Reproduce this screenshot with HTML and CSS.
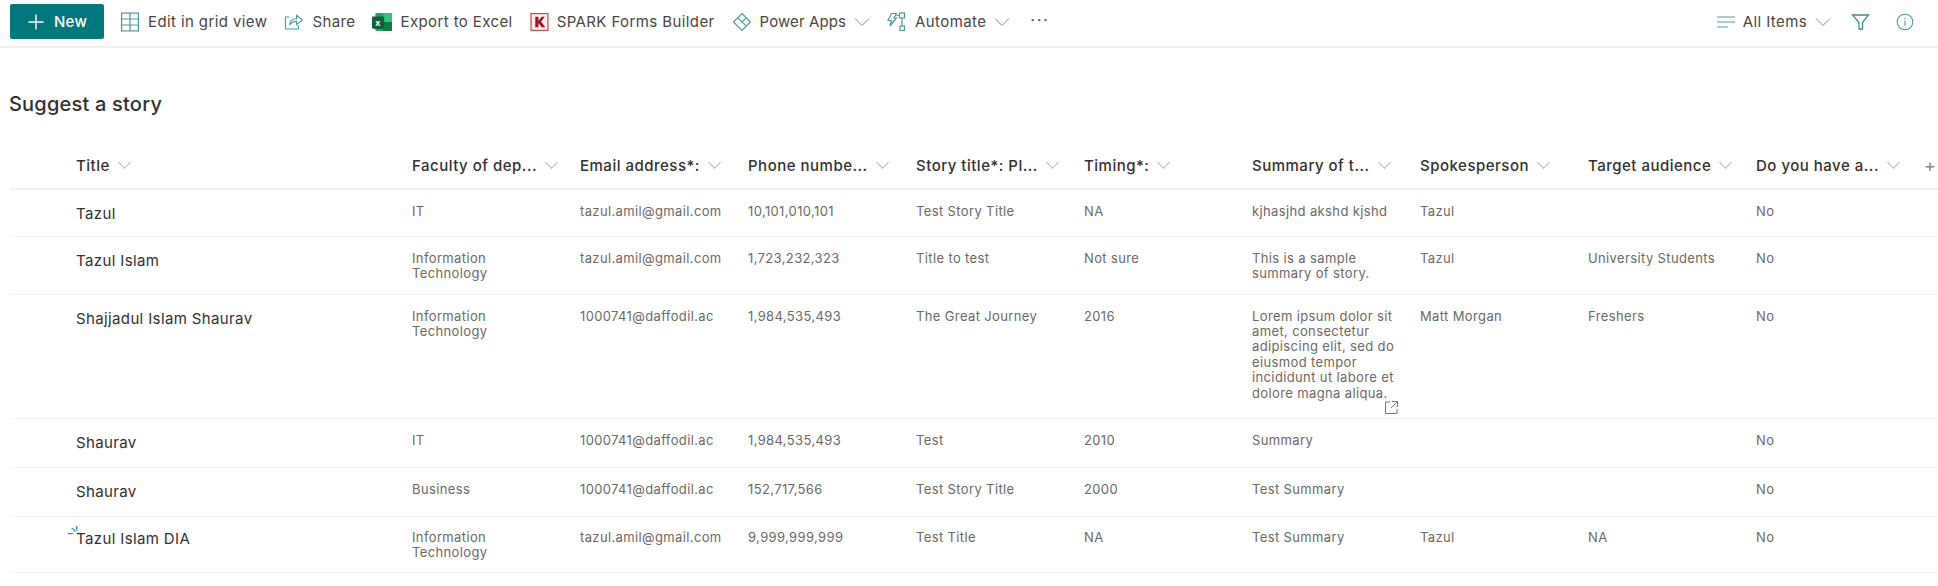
FILE: index.html
```html
<!DOCTYPE html>
<html>

	<head>
		<meta charset="UTF-8">
		<title>Suggest a story</title>
		<link rel="stylesheet" href="styles.css">
	</head>

	<body>
		<!--toolbar-->
		<div class="toolbar">
			<div class="btn-new">
				<svg width="18" height="18" viewBox="0 0 18 18"><path d="M9 1.500v15M1.500 9h15" stroke="#fff" stroke-width="1.400" fill="none"/></svg>
				<span>New</span>
			</div>
			<div class="tool tool-grid">
				<svg width="20" height="20" viewBox="0 0 20 20" fill="none" stroke="#4f9a9c" stroke-width="1.200"><rect x="1.600" y="1.100" width="16.800" height="17.800"/><path d="M1.600 7h16.800M1.600 13h16.800M10 1.100v17.800"/></svg>
				<span>Edit in grid view</span>
			</div>
			<div class="tool tool-share">
				<svg width="20" height="18" viewBox="0 0 20 18" fill="none" stroke="#4f9a9c" stroke-width="1.100"><path d="M5 4H1.500v12h13v-4"/><path d="M5.500 12c.4-4 3.200-6.300 7-6.300V2.200L18.500 7l-6 4.600V8.400c-3 0-5.200.9-7 3.600z"/></svg>
				<span>Share</span>
			</div>
			<div class="tool tool-excel">
				<svg width="20" height="20" viewBox="0 0 18 18"><rect x="3" y="1" width="15" height="16" rx="1" fill="#21a366"/><rect x="10" y="1" width="8" height="8" fill="#33c481"/><rect x="10" y="9" width="8" height="8" fill="#107c41"/><rect x="0" y="4" width="11" height="11" rx="1" fill="#185c37"/><text x="5.500" y="12.500" font-size="8" font-weight="700" fill="#fff" text-anchor="middle" font-family="Inter, sans-serif">x</text></svg>
				<span>Export to Excel</span>
			</div>
			<div class="tool tool-spark">
				<svg width="19" height="20" viewBox="0 0 18 18"><rect x="1" y="1" width="16" height="16" fill="#fbeeee" stroke="#c8505a" stroke-width="1.200"/><path d="M5 4h3v4l3-4h3l-3.500 4.500L14.500 14h-3.500L8 10v4H5z" fill="#a5121f"/></svg>
				<span>SPARK Forms Builder</span>
			</div>
			<div class="tool tool-apps">
				<svg width="20" height="20" viewBox="0 0 20 20" fill="none" stroke="#4f9a9c" stroke-width="1.200"><path d="M10 1.500l8.500 8.500-8.500 8.500L1.500 10zM5.800 5.800l8.400 8.400M14.200 5.800L10 10"/></svg>
				<span>Power Apps</span>
				<svg class="chev" width="16" height="8" viewBox="0 0 16 8"><path d="M1 .5l7 7 7-7" fill="none" stroke="#8a8886"/></svg>
			</div>
			<div class="tool tool-auto">
				<svg width="21" height="20" viewBox="0 0 20 20" fill="none" stroke="#4f9a9c" stroke-width="1.200"><path d="M5 1.500h5L7.500 6H10l-6.500 8L5 8.500H1.500z"/><rect x="13" y="1" width="5" height="5"/><rect x="13.500" y="14" width="4.500" height="4.500"/><path d="M15.500 6v8M10 3.500h3"/></svg>
				<span>Automate</span>
				<svg class="chev" width="16" height="8" viewBox="0 0 16 8"><path d="M1 .5l7 7 7-7" fill="none" stroke="#8a8886"/></svg>
			</div>
			<div class="tool-more">···</div>
			<div class="toolbar-right">
				<div class="tool tool-view">
					<svg width="18" height="12" viewBox="0 0 18 12" fill="none" stroke="#4f9a9c" stroke-width="1.100"><path d="M0 1h18M0 6h18M0 11h11"/></svg>
					<span>All Items</span>
					<svg class="chev" width="16" height="8" viewBox="0 0 16 8"><path d="M1 .5l7 7 7-7" fill="none" stroke="#8a8886"/></svg>
				</div>
				<svg class="tool-filter" width="19" height="18" viewBox="0 0 18 18" fill="none" stroke="#3f8f92" stroke-width="1.300"><path d="M1 2h16l-6 7.500V16H7.500V9.500z"/></svg>
				<svg class="tool-info" width="18" height="18" viewBox="0 0 18 18" fill="none" stroke="#4f9a9c" stroke-width="1.100"><circle cx="9" cy="9" r="7.800"/><path d="M9 7.800v5M9 5v1.200"/></svg>
			</div>
		</div>

		<h1 class="list-title">Suggest a story</h1>

		<!--list-->
		<table class="list">
			<colgroup>
				<col class="col-title">
				<col span="9" class="col-field">
				<col class="col-add">
			</colgroup>
			<thead>
				<tr>
					<th><span>Title</span><i class="sort"></i></th>
					<th><span>Faculty of dep...</span><i class="sort"></i></th>
					<th><span>Email address*:</span><i class="sort"></i></th>
					<th><span>Phone numbe...</span><i class="sort"></i></th>
					<th><span>Story title*: Pl...</span><i class="sort"></i></th>
					<th><span>Timing*:</span><i class="sort"></i></th>
					<th><span>Summary of t...</span><i class="sort"></i></th>
					<th><span>Spokesperson</span><i class="sort"></i></th>
					<th><span>Target audience</span><i class="sort"></i></th>
					<th><span>Do you have a...</span><i class="sort"></i></th>
					<th class="add">+</th>
				</tr>
			</thead>
			<tbody>
				<tr class="row-1">
					<td class="title">Tazul</td>
					<td>IT</td>
					<td>tazul.amil@gmail.com</td>
					<td>10,101,010,101</td>
					<td>Test Story Title</td>
					<td>NA</td>
					<td>kjhasjhd akshd kjshd</td>
					<td>Tazul</td>
					<td></td>
					<td>No</td>
					<td></td>
				</tr>
				<tr class="row-2">
					<td class="title">Tazul Islam</td>
					<td>Information<br>Technology</td>
					<td>tazul.amil@gmail.com</td>
					<td>1,723,232,323</td>
					<td>Title to test</td>
					<td>Not sure</td>
					<td>This is a sample<br>summary of story.</td>
					<td>Tazul</td>
					<td>University Students</td>
					<td>No</td>
					<td></td>
				</tr>
				<tr class="row-3">
					<td class="title">Shajjadul Islam Shaurav</td>
					<td>Information<br>Technology</td>
					<td>1000741@daffodil.ac</td>
					<td>1,984,535,493</td>
					<td>The Great Journey</td>
					<td>2016</td>
					<td class="summary">
						<div class="clip">Lorem ipsum dolor sit<br>amet, consectetur<br>adipiscing elit, sed do<br>eiusmod tempor<br>incididunt ut labore et<br>dolore magna aliqua.</div>
						<svg class="expand" width="13" height="13" viewBox="0 0 13 13" fill="none" stroke="#797775"><path d="M5 1H.5v11.500h11.500V8M7 .5h5.500V6M12.500.5L6 7"/></svg>
					</td>
					<td>Matt Morgan</td>
					<td>Freshers</td>
					<td>No</td>
					<td></td>
				</tr>
				<tr class="row-4">
					<td class="title">Shaurav</td>
					<td>IT</td>
					<td>1000741@daffodil.ac</td>
					<td>1,984,535,493</td>
					<td>Test</td>
					<td>2010</td>
					<td>Summary</td>
					<td></td>
					<td></td>
					<td>No</td>
					<td></td>
				</tr>
				<tr class="row-4">
					<td class="title">Shaurav</td>
					<td>Business</td>
					<td>1000741@daffodil.ac</td>
					<td>152,717,566</td>
					<td>Test Story Title</td>
					<td>2000</td>
					<td>Test Summary</td>
					<td></td>
					<td></td>
					<td>No</td>
					<td></td>
				</tr>
				<tr class="row-6">
					<td class="title new-item">
						<svg class="glimmer" width="10" height="10" viewBox="0 0 8 8" fill="none" stroke="#2a8dd4"><path d="M7 0v4M3 1.500L6 4.500M0 6h4"/></svg>
						Tazul Islam DIA
					</td>
					<td>Information<br>Technology</td>
					<td>tazul.amil@gmail.com</td>
					<td>9,999,999,999</td>
					<td>Test Title</td>
					<td>NA</td>
					<td>Test Summary</td>
					<td>Tazul</td>
					<td>NA</td>
					<td>No</td>
					<td></td>
				</tr>
			</tbody>
		</table>
	</body>

</html>
```

FILE: styles.css
```css
* {
	margin: 0;
	padding: 0;
	box-sizing: border-box;
}

body {
	font-family: Inter, "Liberation Sans", sans-serif;
	color: #323130;
	background-color: #fff;
	overflow: hidden;
}

.toolbar {
	height: 48px;
	padding: 4px 0 0 10px;
	border-bottom: 2px solid #f0f0ef;
	display: flex;
	align-items: flex-start;
	font-size: 15px;
}

.btn-new {
	width: 94px;
	height: 35px;
	border-radius: 2px;
	background-color: #03787c;
	color: #fff;
	font-weight: 500;
	letter-spacing: 0.3px;
	display: flex;
	align-items: center;
	justify-content: center;
	gap: 9px;
}

.tool {
	height: 35px;
	display: flex;
	align-items: center;
	gap: 8px;
	white-space: nowrap;
	letter-spacing: 0.4px;
}

.tool span {
	color: #484644;
}

.tool-grid {
	margin-left: 16px;
}

.tool-share,
.tool-excel,
.tool-spark {
	margin-left: 17px;
}

.tool-apps {
	margin-left: 17px;
	letter-spacing: 0.1px;
}

.tool-auto {
	margin-left: 16px;
}

.tool-more {
	margin-left: 20px;
	height: 35px;
	line-height: 32px;
	font-size: 17px;
	color: #605e5c;
	letter-spacing: 1.500px;
}

.toolbar-right {
	margin-left: auto;
	padding-right: 24px;
	height: 35px;
	display: flex;
	align-items: center;
}

.tool-filter {
	margin-left: 20px;
}

.tool-info {
	margin-left: 26px;
}

.list-title {
	font-size: 20px;
	font-weight: 500;
	letter-spacing: 0.2px;
	line-height: 28px;
	margin: 42px 0 0 9px;
	color: #323130;
}

.list {
	width: 1928px;
	margin: 25px 0 0 10px;
	border-collapse: collapse;
	table-layout: fixed;
}

.col-title {
	width: 402px;
}

.col-field {
	width: 168px;
}

.list th {
	height: 46px;
	text-align: left;
	font-size: 15px;
	font-weight: 500;
	letter-spacing: 0.5px;
	color: #323130;
	white-space: nowrap;
	vertical-align: middle;
}

.list th:first-child,
.list td:first-child {
	padding-left: 66px;
}

.list thead tr {
	border-bottom: 2px solid #f0f0ef;
}

.sort {
	display: inline-block;
	width: 9px;
	height: 9px;
	margin: 0 0 4px 10px;
	border-right: 1px solid #b3b0ad;
	border-bottom: 1px solid #b3b0ad;
	transform: rotate(45deg);
}

.list th.add {
	font-weight: 400;
	color: #8a8886;
	font-size: 18px;
}

.list tbody tr {
	border-bottom: 1px solid #f0f0ef;
}

.list td {
	padding: 14px 12px 0 0;
	vertical-align: top;
	font-size: 13px;
	letter-spacing: 0.37px;
	line-height: 15.400px;
	color: #6b6967;
}

.list td.title {
	font-size: 15px;
	line-height: 20px;
	color: #323130;
}

.row-1 {
	height: 47px;
}

.row-2 {
	height: 58px;
}

.row-3 {
	height: 124px;
}

.row-4 {
	height: 49px;
}

.row-6 {
	height: 56px;
}

.list .row-6 td {
	padding-top: 13px;
}

.list .row-6 td.title {
	padding-top: 12px;
}

.summary {
	position: relative;
}

.clip {
	height: 92px;
	overflow: hidden;
}

.expand {
	position: absolute;
	right: 22px;
	bottom: 4px;
}

.new-item {
	position: relative;
}

.glimmer {
	position: absolute;
	left: 58px;
	top: 9px;
}
```
